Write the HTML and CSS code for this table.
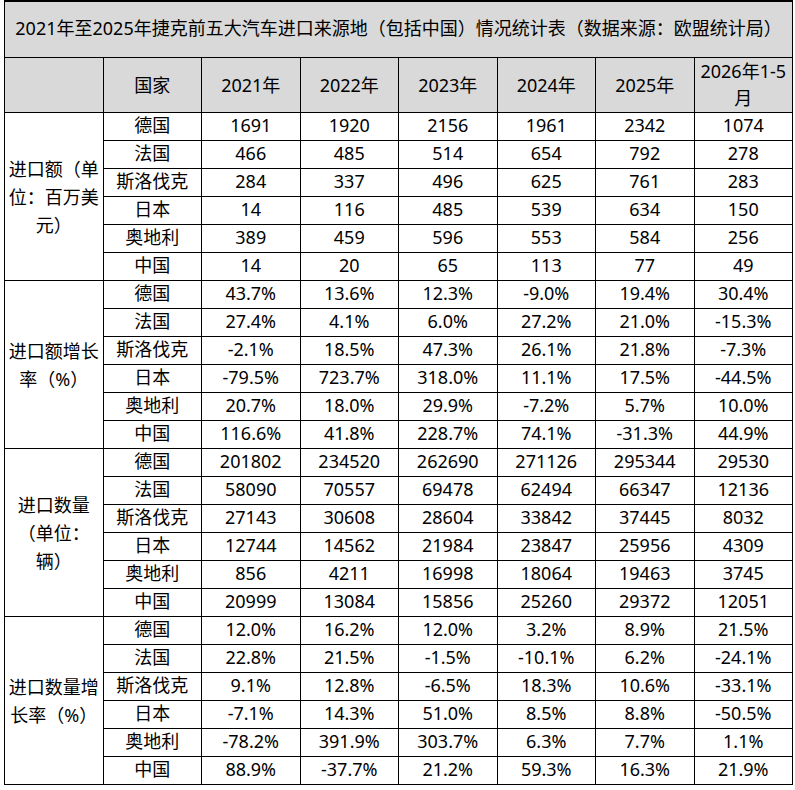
FILE: index.html
```html
<!DOCTYPE html>
<html lang="zh-CN">
<head>
<meta charset="utf-8">
<title>2021年至2025年捷克前五大汽车进口来源地情况统计表</title>
<link rel="stylesheet" href="styles.css">
</head>
<body>
<table class="stats">
  <colgroup>
    <col><col><col><col><col><col><col><col>
  </colgroup>
  <thead>
    <tr class="title-row"><th colspan="8">2021年至2025年捷克前五大汽车进口来源地（包括中国）情况统计表（数据来源：欧盟统计局）</th></tr>
    <tr class="head-row"><th></th><th>国家</th><th>2021年</th><th>2022年</th><th>2023年</th><th>2024年</th><th>2025年</th><th>2026年1-5月</th></tr>
  </thead>
  <tbody>
    <tr><td class="label" rowspan="6">进口额（单位：百万美元）</td><td>德国</td><td>1691</td><td>1920</td><td>2156</td><td>1961</td><td>2342</td><td>1074</td></tr>
    <tr><td>法国</td><td>466</td><td>485</td><td>514</td><td>654</td><td>792</td><td>278</td></tr>
    <tr><td>斯洛伐克</td><td>284</td><td>337</td><td>496</td><td>625</td><td>761</td><td>283</td></tr>
    <tr><td>日本</td><td>14</td><td>116</td><td>485</td><td>539</td><td>634</td><td>150</td></tr>
    <tr><td>奥地利</td><td>389</td><td>459</td><td>596</td><td>553</td><td>584</td><td>256</td></tr>
    <tr><td>中国</td><td>14</td><td>20</td><td>65</td><td>113</td><td>77</td><td>49</td></tr>

    <tr><td class="label" rowspan="6">进口额增长率（%）</td><td>德国</td><td>43.7%</td><td>13.6%</td><td>12.3%</td><td>-9.0%</td><td>19.4%</td><td>30.4%</td></tr>
    <tr><td>法国</td><td>27.4%</td><td>4.1%</td><td>6.0%</td><td>27.2%</td><td>21.0%</td><td>-15.3%</td></tr>
    <tr><td>斯洛伐克</td><td>-2.1%</td><td>18.5%</td><td>47.3%</td><td>26.1%</td><td>21.8%</td><td>-7.3%</td></tr>
    <tr><td>日本</td><td>-79.5%</td><td>723.7%</td><td>318.0%</td><td>11.1%</td><td>17.5%</td><td>-44.5%</td></tr>
    <tr><td>奥地利</td><td>20.7%</td><td>18.0%</td><td>29.9%</td><td>-7.2%</td><td>5.7%</td><td>10.0%</td></tr>
    <tr><td>中国</td><td>116.6%</td><td>41.8%</td><td>228.7%</td><td>74.1%</td><td>-31.3%</td><td>44.9%</td></tr>

    <tr><td class="label" rowspan="6">进口数量<br>（单位：<br>辆）</td><td>德国</td><td>201802</td><td>234520</td><td>262690</td><td>271126</td><td>295344</td><td>29530</td></tr>
    <tr><td>法国</td><td>58090</td><td>70557</td><td>69478</td><td>62494</td><td>66347</td><td>12136</td></tr>
    <tr><td>斯洛伐克</td><td>27143</td><td>30608</td><td>28604</td><td>33842</td><td>37445</td><td>8032</td></tr>
    <tr><td>日本</td><td>12744</td><td>14562</td><td>21984</td><td>23847</td><td>25956</td><td>4309</td></tr>
    <tr><td>奥地利</td><td>856</td><td>4211</td><td>16998</td><td>18064</td><td>19463</td><td>3745</td></tr>
    <tr><td>中国</td><td>20999</td><td>13084</td><td>15856</td><td>25260</td><td>29372</td><td>12051</td></tr>

    <tr><td class="label" rowspan="6">进口数量增长率（%）</td><td>德国</td><td>12.0%</td><td>16.2%</td><td>12.0%</td><td>3.2%</td><td>8.9%</td><td>21.5%</td></tr>
    <tr><td>法国</td><td>22.8%</td><td>21.5%</td><td>-1.5%</td><td>-10.1%</td><td>6.2%</td><td>-24.1%</td></tr>
    <tr><td>斯洛伐克</td><td>9.1%</td><td>12.8%</td><td>-6.5%</td><td>18.3%</td><td>10.6%</td><td>-33.1%</td></tr>
    <tr><td>日本</td><td>-7.1%</td><td>14.3%</td><td>51.0%</td><td>8.5%</td><td>8.8%</td><td>-50.5%</td></tr>
    <tr><td>奥地利</td><td>-78.2%</td><td>391.9%</td><td>303.7%</td><td>6.3%</td><td>7.7%</td><td>1.1%</td></tr>
    <tr><td>中国</td><td>88.9%</td><td>-37.7%</td><td>21.2%</td><td>59.3%</td><td>16.3%</td><td>21.9%</td></tr>
  </tbody>
</table>
</body>
</html>
```

FILE: styles.css
```css
html, body {
  margin: 0;
  padding: 0;
  background: #ffffff;
}

body {
  font-family: "Noto Sans", "Noto Sans CJK SC", sans-serif;
  font-size: 18px;
  color: #000000;
}

.stats {
  border-collapse: collapse;
  table-layout: fixed;
  width: 788px;
  margin-left: 4px;
  border-top: 2px solid #000;
}

.stats col {
  width: 98.5px;
}

.stats th,
.stats td {
  border: 1px solid #000;
  padding: 0 2px;
  text-align: center;
  vertical-align: middle;
  font-weight: normal;
  line-height: 27px;
  white-space: normal;
}

.title-row th {
  height: 53px;
  background: #d9d9d9;
  padding: 0 0 2px;
  white-space: nowrap;
}

.head-row th {
  height: 54px;
  background: #d9d9d9;
}

.stats tbody td {
  height: 25px;
  line-height: 25px;
  padding-bottom: 2px;
}

.stats td.label {
  line-height: 28px;
  padding: 0 3px;
}
```
